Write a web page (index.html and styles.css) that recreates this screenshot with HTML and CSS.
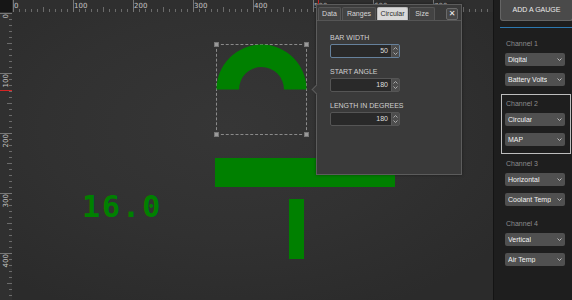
FILE: index.html
```html
<!DOCTYPE html>
<html>
<head>
<meta charset="utf-8">
<link rel="stylesheet" href="styles.css">
</head>
<body>
<div class="app">
  <div class="editor">
    <div class="corner"></div>
    <div class="ruler-top">
      <svg width="481" height="12" viewBox="0 0 481 12">
        <defs>
          <pattern id="tMinor" x="1" y="0" width="6" height="12" patternUnits="userSpaceOnUse"><rect x="0" y="9" width="1" height="3" fill="#6b6b6b"/></pattern>
          <pattern id="tMid" x="1" y="0" width="30" height="12" patternUnits="userSpaceOnUse"><rect x="0" y="7" width="1" height="5" fill="#6b6b6b"/></pattern>
          <pattern id="tMajor" x="1" y="0" width="60" height="12" patternUnits="userSpaceOnUse"><rect x="0" y="0" width="1" height="12" fill="#767676"/></pattern>
        </defs>
        <rect width="481" height="12" fill="url(#tMinor)"/>
        <rect width="481" height="12" fill="url(#tMid)"/>
        <rect width="481" height="12" fill="url(#tMajor)"/>
        <g class="rl">
          <text x="2" y="8">0</text>
          <text x="62" y="8">100</text>
          <text x="122" y="8">200</text>
          <text x="182" y="8">300</text>
          <text x="242" y="8">400</text>
          <text x="302" y="8">500</text>
          <text x="362" y="8">600</text>
          <text x="422" y="8">700</text>
        </g>
        <rect x="306" y="0" width="1" height="12" fill="#d42424"/>
      </svg>
    </div>
    <div class="ruler-left">
      <svg width="12" height="288" viewBox="0 0 12 288">
        <defs>
          <pattern id="lMinor" x="0" y="1" width="12" height="6" patternUnits="userSpaceOnUse"><rect x="9" y="0" width="3" height="1" fill="#6b6b6b"/></pattern>
          <pattern id="lMid" x="0" y="1" width="12" height="30" patternUnits="userSpaceOnUse"><rect x="7" y="0" width="5" height="1" fill="#6b6b6b"/></pattern>
          <pattern id="lMajor" x="0" y="1" width="12" height="60" patternUnits="userSpaceOnUse"><rect x="0" y="0" width="12" height="1" fill="#767676"/></pattern>
        </defs>
        <rect width="12" height="288" fill="url(#lMinor)"/>
        <rect width="12" height="288" fill="url(#lMid)"/>
        <rect width="12" height="288" fill="url(#lMajor)"/>
        <g class="rl">
          <text x="8" y="2" text-anchor="end" transform="rotate(-90 8 2)">0</text>
          <text x="8" y="62" text-anchor="end" transform="rotate(-90 8 62)">100</text>
          <text x="8" y="122" text-anchor="end" transform="rotate(-90 8 122)">200</text>
          <text x="8" y="182" text-anchor="end" transform="rotate(-90 8 182)">300</text>
          <text x="8" y="242" text-anchor="end" transform="rotate(-90 8 242)">400</text>
        </g>
        <rect x="0" y="78" width="12" height="1" fill="#d42424"/>
      </svg>
    </div>
    <div class="canvas">
      <div class="selection">
        <span class="handle h-tl"></span>
        <span class="handle h-tr"></span>
        <span class="handle h-bl"></span>
        <span class="handle h-br"></span>
      </div>
      <svg class="arc" width="91" height="46" viewBox="0 0 91 46">
        <path d="M0.5 45.5 A45 45 0 0 1 90.5 45.5 L68 45.5 A22.5 22.5 0 0 0 23 45.5 Z" fill="#008000"/>
      </svg>
      <div class="hbar"></div>
      <div class="vbar"></div>
      <div class="digital">16.0</div>
    </div>

    <div class="popup">
      <span class="pointer"></span>
      <div class="tabs">
        <div class="tab t-data">Data</div>
        <div class="tab t-ranges">Ranges</div>
        <div class="tab t-circ active">Circular</div>
        <div class="tab t-size">Size</div>
        <div class="close">✕</div>
      </div>
      <div class="pbody">
        <div class="flabel">BAR WIDTH</div>
        <div class="num focus"><span class="val">50</span><span class="spin"><svg width="7" height="12" viewBox="0 0 7 12"><path d="M1.5 4.5 L3.5 2.5 L5.5 4.5 M1.5 7.5 L3.5 9.5 L5.5 7.5" fill="none" stroke="#aaa" stroke-width="1"/></svg></span></div>
        <div class="flabel">START ANGLE</div>
        <div class="num"><span class="val">180</span><span class="spin"><svg width="7" height="12" viewBox="0 0 7 12"><path d="M1.5 4.5 L3.5 2.5 L5.5 4.5 M1.5 7.5 L3.5 9.5 L5.5 7.5" fill="none" stroke="#aaa" stroke-width="1"/></svg></span></div>
        <div class="flabel">LENGTH IN DEGREES</div>
        <div class="num"><span class="val">180</span><span class="spin"><svg width="7" height="12" viewBox="0 0 7 12"><path d="M1.5 4.5 L3.5 2.5 L5.5 4.5 M1.5 7.5 L3.5 9.5 L5.5 7.5" fill="none" stroke="#aaa" stroke-width="1"/></svg></span></div>
      </div>
    </div>
  </div>

  <div class="sidebar">
    <div class="add-btn">ADD A GAUGE</div>
    <div class="divider"></div>
    <div class="channel">
      <div class="ch-label">Channel 1</div>
      <div class="select"><span>Digital</span><svg width="5" height="3" viewBox="0 0 5 3"><path d="M0.5 0.5 L2.5 2.5 L4.5 0.5" fill="none" stroke="#bbb"/></svg></div>
      <div class="select"><span>Battery Volts</span><svg width="5" height="3" viewBox="0 0 5 3"><path d="M0.5 0.5 L2.5 2.5 L4.5 0.5" fill="none" stroke="#bbb"/></svg></div>
    </div>
    <div class="channel active">
      <div class="ch-label">Channel 2</div>
      <div class="select"><span>Circular</span><svg width="5" height="3" viewBox="0 0 5 3"><path d="M0.5 0.5 L2.5 2.5 L4.5 0.5" fill="none" stroke="#bbb"/></svg></div>
      <div class="select"><span>MAP</span><svg width="5" height="3" viewBox="0 0 5 3"><path d="M0.5 0.5 L2.5 2.5 L4.5 0.5" fill="none" stroke="#bbb"/></svg></div>
    </div>
    <div class="channel">
      <div class="ch-label">Channel 3</div>
      <div class="select"><span>Horizontal</span><svg width="5" height="3" viewBox="0 0 5 3"><path d="M0.5 0.5 L2.5 2.5 L4.5 0.5" fill="none" stroke="#bbb"/></svg></div>
      <div class="select"><span>Coolant Temp</span><svg width="5" height="3" viewBox="0 0 5 3"><path d="M0.5 0.5 L2.5 2.5 L4.5 0.5" fill="none" stroke="#bbb"/></svg></div>
    </div>
    <div class="channel">
      <div class="ch-label">Channel 4</div>
      <div class="select"><span>Vertical</span><svg width="5" height="3" viewBox="0 0 5 3"><path d="M0.5 0.5 L2.5 2.5 L4.5 0.5" fill="none" stroke="#bbb"/></svg></div>
      <div class="select"><span>Air Temp</span><svg width="5" height="3" viewBox="0 0 5 3"><path d="M0.5 0.5 L2.5 2.5 L4.5 0.5" fill="none" stroke="#bbb"/></svg></div>
    </div>
  </div>
</div>
</body>
</html>
```
FILE: styles.css
```css
* { box-sizing: border-box; }
html, body { margin: 0; padding: 0; }
body {
  width: 572px;
  height: 300px;
  overflow: hidden;
  background: #1e1e1e;
  font-family: "Liberation Sans", Arial, sans-serif;
  font-size: 7px;
}
.app {
  display: flex;
  width: 572px;
  height: 300px;
}
.editor {
  position: relative;
  width: 493px;
  height: 300px;
  display: grid;
  grid-template-columns: 12px 1fr;
  grid-template-rows: 12px 1fr;
}
.corner { background: #161616; }
.ruler-top {
  background: #2f2f2f;
  overflow: hidden;
}
.ruler-left {
  background: #303030;
  overflow: hidden;
}
.ruler-top svg, .ruler-left svg { display: block; }
.rl text {
  font-family: "DejaVu Sans", sans-serif;
  font-size: 7px;
  fill: #c4c4c4;
}
.canvas {
  position: relative;
  overflow: hidden;
  background: radial-gradient(ellipse 70% 70% at 45% 40%, #363636 0%, #313131 55%, #2b2b2b 100%);
}
.selection {
  position: absolute;
  left: 204px;
  top: 32px;
  width: 91px;
  height: 91px;
  border: 1px dashed #8a8a8a;
}
.handle {
  position: absolute;
  width: 5px;
  height: 5px;
  background: #9a9a9a;
  border: 1px solid #777;
}
.h-tl { left: -3px; top: -3px; }
.h-tr { right: -3px; top: -3px; }
.h-bl { left: -3px; bottom: -3px; }
.h-br { right: -3px; bottom: -3px; }
.arc {
  position: absolute;
  left: 204px;
  top: 32px;
  display: block;
}
.hbar {
  position: absolute;
  left: 203px;
  top: 146px;
  width: 180px;
  height: 29px;
  background: #008000;
}
.vbar {
  position: absolute;
  left: 277px;
  top: 187px;
  width: 15px;
  height: 60px;
  background: #008000;
}
.digital {
  position: absolute;
  left: 70px;
  top: 180px;
  font-family: "DejaVu Sans Mono", monospace;
  font-weight: bold;
  font-size: 30px;
  line-height: 30px;
  letter-spacing: 2px;
  color: #008000;
}

/* popup */
.popup {
  position: absolute;
  left: 316px;
  top: 4px;
  width: 146px;
  height: 171px;
  background: #3a3a3a;
  border: 1px solid #5c5c5c;
  box-shadow: 0 0 3px rgba(0,0,0,0.4);
}
.pointer {
  position: absolute;
  left: -4px;
  top: 81px;
  width: 7px;
  height: 7px;
  background: #3a3a3a;
  border-left: 1px solid #5c5c5c;
  border-bottom: 1px solid #5c5c5c;
  transform: rotate(45deg);
}
.tabs {
  display: flex;
  align-items: flex-start;
  gap: 1px;
  padding: 2px 3px 0 1px;
  height: 16px;
  border-bottom: 1px solid #555;
}
.tab {
  height: 13px;
  line-height: 12px;
  text-align: center;
  color: #d6d6d6;
  background: #434343;
  border: 1px solid #565656;
  border-bottom: 0;
  border-radius: 2px 2px 0 0;
  font-size: 7px;
}
.t-data { width: 23px; }
.t-ranges { width: 34px; }
.t-circ { width: 31px; }
.t-size { width: 26px; }
.tab.active {
  background: #d9d9d9;
  color: #2a2a2a;
  border-color: #bdbdbd;
}
.close {
  margin-left: auto;
  margin-top: 1px;
  width: 12px;
  height: 12px;
  background: #474747;
  border: 1px solid #6a6a6a;
  border-radius: 2px;
  color: #f2f2f2;
  font-family: "DejaVu Sans", sans-serif;
  font-weight: bold;
  font-size: 8px;
  line-height: 10px;
  text-align: center;
}
.pbody {
  padding: 12px 0 0 13px;
}
.flabel {
  line-height: 9px;
  height: 9px;
  color: #cfcfcf;
  font-size: 7px;
  margin-top: 9px;
}
.flabel:first-child { margin-top: 0; }
.num {
  margin-top: 2px;
  width: 70px;
  height: 14px;
  background: #292929;
  border: 1px solid #555;
  border-radius: 2px;
  display: flex;
  justify-content: flex-end;
  align-items: stretch;
}
.num.focus { border-color: #66819c; }
.val {
  color: #dedede;
  font-size: 7px;
  line-height: 12px;
  padding-right: 3px;
}
.spin {
  width: 8px;
  background: #4d4d4d;
  border-left: 1px solid #5a5a5a;
  display: flex;
  align-items: center;
  justify-content: center;
}
.spin svg { display: block; }

/* sidebar */
.sidebar {
  width: 79px;
  height: 300px;
  background: #1e1e1e;
  border-left: 1px solid #141414;
}
.add-btn {
  margin-left: 6px;
  width: 73px;
  height: 21px;
  background: #4a4a4a;
  border: 1px solid #656565;
  border-top: 0;
  border-radius: 0 0 3px 3px;
  color: #eaeaea;
  font-size: 7px;
  line-height: 20px;
  text-align: center;
}
.divider {
  margin: 6px 0 6px 6px;
  height: 1px;
  background: #2c78b0;
}
.channel {
  margin-left: 7px;
  width: 70px;
  border: 1px solid transparent;
  padding: 4px 3px 7px;
}
.channel.active { border-color: #bdbdbd; }
.ch-label {
  padding-left: 1px;
  height: 10px;
  line-height: 10px;
  color: #8c8c8c;
  font-size: 7px;
}
.select {
  margin-top: 4px;
  width: 60px;
  height: 13px;
  background: #505050;
  border-radius: 2px;
  display: flex;
  align-items: center;
  justify-content: space-between;
  padding: 0 3px 0 3px;
  color: #f2f2f2;
  font-size: 7px;
  white-space: nowrap;
  overflow: hidden;
}
.select + .select { margin-top: 7px; }
.select span { overflow: hidden; }
.select svg { flex: none; display: block; margin-left: 2px; }
```
